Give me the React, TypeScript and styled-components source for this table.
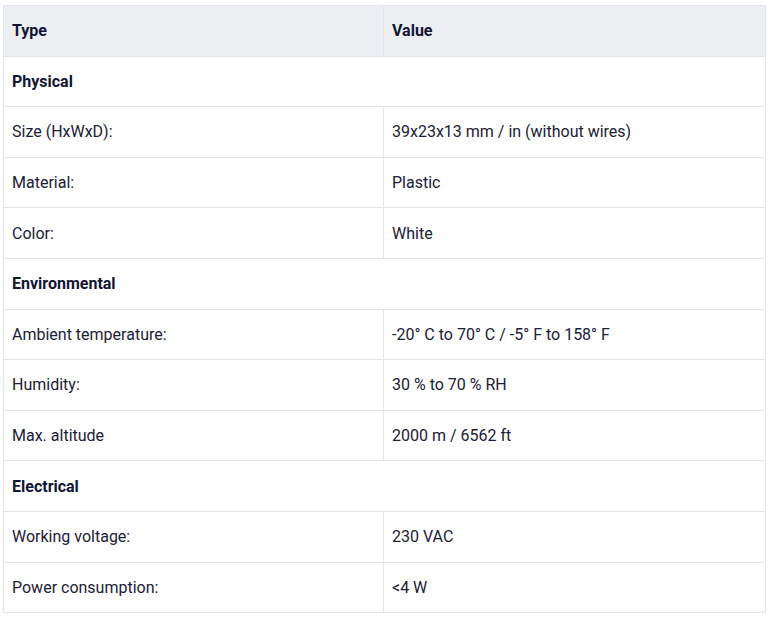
import React from "react";
import styled, { createGlobalStyle } from "styled-components";

const Global = createGlobalStyle`
  html, body { margin: 0; padding: 0; background: #ffffff; }
  body { font-family: Roboto, "Liberation Sans", Arial, sans-serif; }
`;

const Wrap = styled.div`
  padding: 5px 5px 0 3px;
`;

const Table = styled.table`
  width: 762px;
  table-layout: fixed;
  border-collapse: collapse;
  font-family: Roboto, "Liberation Sans", Arial, sans-serif;
  font-size: 16px;
  color: #1c2035;
  border: 1px solid #e3e5eb;
`;

const Col = styled.col<{ $w: number }>`
  width: ${(p) => p.$w}px;
`;

const Row = styled.tr<{ $head?: boolean }>`
  height: 50.6px;
  background: ${(p) => (p.$head ? "#eceef2" : "#ffffff")};
`;

const Cell = styled.td<{ $bold?: boolean }>`
  border: 1px solid #e3e5eb;
  padding: 1px 8px 0;
  vertical-align: middle;
  line-height: 20px;
  font-weight: ${(p) => (p.$bold ? 700 : 400)};
  color: ${(p) => (p.$bold ? "#111633" : "#1c2035")};
`;

const HeadCell = styled.th`
  border: 1px solid #e3e5eb;
  padding: 0 8px;
  text-align: left;
  vertical-align: middle;
  font-weight: 700;
  color: #111633;
`;

type Item = { section: string } | { k: string; v: string };

const data: Item[] = [
  { section: "Physical" },
  { k: "Size (HxWxD):", v: "39x23x13 mm / in (without wires)" },
  { k: "Material:", v: "Plastic" },
  { k: "Color:", v: "White" },
  { section: "Environmental" },
  { k: "Ambient temperature:", v: "-20° C to 70° C / -5° F to 158° F" },
  { k: "Humidity:", v: "30 % to 70 % RH" },
  { k: "Max. altitude", v: "2000 m / 6562 ft" },
  { section: "Electrical" },
  { k: "Working voltage:", v: "230 VAC" },
  { k: "Power consumption:", v: "<4 W" },
];

export default function App() {
  return (
    <>
      <Global />
      <Wrap>
        <Table>
          <colgroup>
            <Col $w={380} />
            <Col $w={382} />
          </colgroup>
          <thead>
            <Row $head>
              <HeadCell>Type</HeadCell>
              <HeadCell>Value</HeadCell>
            </Row>
          </thead>
          <tbody>
            {data.map((d, i) =>
              "section" in d ? (
                <Row key={i}>
                  <Cell $bold colSpan={2}>
                    {d.section}
                  </Cell>
                </Row>
              ) : (
                <Row key={i}>
                  <Cell>{d.k}</Cell>
                  <Cell>{d.v}</Cell>
                </Row>
              )
            )}
          </tbody>
        </Table>
      </Wrap>
    </>
  );
}
